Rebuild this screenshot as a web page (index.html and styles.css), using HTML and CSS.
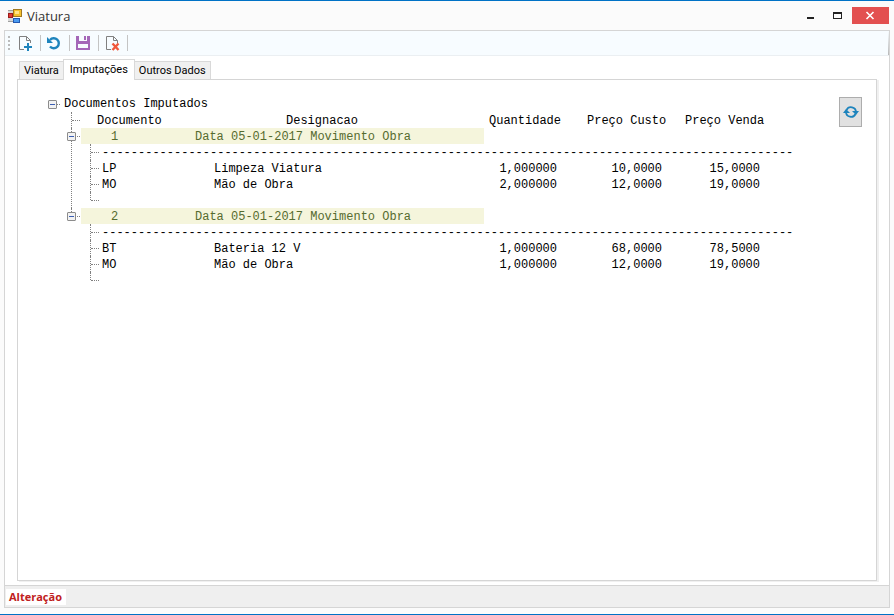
FILE: index.html
```html
<!DOCTYPE html>
<html lang="pt">
<head>
<meta charset="utf-8">
<title>Viatura</title>
<link rel="stylesheet" href="styles.css">
</head>
<body>
<div class="window">
  <header class="titlebar">
    <svg class="app-icon" width="14" height="14" viewBox="0 0 14 14" aria-hidden="true">
      <path d="M0 1h5v12H0z" fill="#d8d8d8"/>
      <path d="M0 1h5v1H0zM0 12h5v1H0z" fill="#a0a0a0"/>
      <rect x="0.5" y="4.5" width="4" height="4" fill="#e03a34" stroke="#9c1c1c"/>
      <rect x="5.5" y="0.5" width="8" height="7" fill="#f5c02c" stroke="#a07820"/>
      <rect x="7" y="2" width="4" height="3" fill="#ffe48a"/>
      <rect x="5.5" y="9.5" width="6" height="4" fill="#4a9af0" stroke="#2458b0"/>
    </svg>
    <h1 class="title">Viatura</h1>
    <div class="window-buttons">
      <button class="window-button" aria-label="Minimizar"><svg width="27" height="17" viewBox="0 0 27 17"><path d="M9 10h7v2H9z" fill="#222"/></svg></button>
      <button class="window-button" aria-label="Maximizar"><svg width="27" height="17" viewBox="0 0 27 17"><path d="M8 5h9v7H8zM9 7v4h7V7z" fill="#222" fill-rule="evenodd"/></svg></button>
      <button class="window-button close" aria-label="Fechar"><svg width="37" height="17" viewBox="0 0 37 17"><path d="M14.500 5l7 7M21.500 5l-7 7" stroke="#fff" stroke-width="1.600"/></svg></button>
    </div>
  </header>

  <div class="frame">
    <div class="toolbar" role="toolbar" aria-label="Ações">
      <span class="grip"></span>
      <button class="tool" aria-label="Novo"><svg width="16" height="16" viewBox="0 0 16 16"><path d="M7 14.500H2.500V1.500H9.500L13.500 5.500V8M9.500 1.500V5.500H13.500" fill="none" stroke="#808080"/><path d="M11 8v8M7 12h8" stroke="#1e84bd" stroke-width="2"/></svg></button>
      <button class="tool" aria-label="Desfazer"><svg width="16" height="16" viewBox="0 0 16 16"><path d="M4 5A5 5 0 1 1 4 11.500" fill="none" stroke="#1e84bd" stroke-width="2.400"/><path d="M1 2v6h6z" fill="#1e84bd"/></svg></button>
      <button class="tool" aria-label="Gravar"><svg width="16" height="16" viewBox="0 0 16 16"><path d="M1 1h14v14H1z" fill="#a467b8"/><path d="M4 1h8v5H4zM3 9h10v4H3z" fill="#f7fcff"/><path d="M9 1h2v4H9z" fill="#a467b8"/></svg></button>
      <button class="tool" aria-label="Eliminar"><svg width="16" height="16" viewBox="0 0 16 16"><path d="M7 14.500H2.500V1.500H9.500L13.500 5.500V8M9.500 1.500V5.500H13.500" fill="none" stroke="#808080"/><path d="M8.500 8.500l6 6.500M14.500 8.500l-6 6.500" stroke="#f0583c" stroke-width="2.400"/></svg></button>
    </div>

    <main class="content">
      <div class="tabs" role="tablist">
        <button class="tab" role="tab" aria-selected="false">Viatura</button>
        <button class="tab active" role="tab" aria-selected="true">Imputações</button>
        <button class="tab" role="tab" aria-selected="false">Outros Dados</button>
      </div>
      <section class="panel" role="tabpanel">
        <ul class="tree">
          <li class="root">
            <div class="root-row"><button class="toggle" aria-label="Recolher"></button><span>Documentos Imputados</span></div>
            <ul class="documents">
              <li class="node"><div class="row heading"><span>Documento</span><span>Designacao</span><span>Quantidade</span><span>Preço Custo</span><span>Preço Venda</span></div></li>
              <li class="node">
                <button class="toggle" aria-label="Recolher"></button>
                <div class="row band"><span>1</span><span>Data 05-01-2017 Movimento Obra</span></div>
                <ul class="lines">
                  <li class="leaf"><div class="rule">------------------------------------------------------------------------------------------------</div></li>
                  <li class="leaf"><div class="row line"><span>LP</span><span>Limpeza Viatura</span><span>1,000000</span><span>10,0000</span><span>15,0000</span></div></li>
                  <li class="leaf"><div class="row line"><span>MO</span><span>Mão de Obra</span><span>2,000000</span><span>12,0000</span><span>19,0000</span></div></li>
                  <li class="leaf"></li>
                </ul>
              </li>
              <li class="node">
                <button class="toggle" aria-label="Recolher"></button>
                <div class="row band"><span>2</span><span>Data 05-01-2017 Movimento Obra</span></div>
                <ul class="lines">
                  <li class="leaf"><div class="rule">------------------------------------------------------------------------------------------------</div></li>
                  <li class="leaf"><div class="row line"><span>BT</span><span>Bateria 12 V</span><span>1,000000</span><span>68,0000</span><span>78,5000</span></div></li>
                  <li class="leaf"><div class="row line"><span>MO</span><span>Mão de Obra</span><span>1,000000</span><span>12,0000</span><span>19,0000</span></div></li>
                  <li class="leaf"></li>
                </ul>
              </li>
            </ul>
          </li>
        </ul>
        <button class="refresh" aria-label="Atualizar"><svg width="16" height="14" viewBox="0 0 16 14"><path d="M3.500 5A5 5 0 0 1 13 7M12.500 9A5 5 0 0 1 3 7" fill="none" stroke="#1e84bd" stroke-width="1.800"/><path d="M0 8l3-4 4 4zM9 6h7l-3 4z" fill="#1e84bd"/></svg></button>
      </section>
    </main>

    <footer class="status"><span class="mode">Alteração</span></footer>
  </div>
</div>
</body>
</html>
```

FILE: styles.css
```css
* { box-sizing: border-box; }

body {
  margin: 0;
  background: #fbfbfb;
  color: #000;
  font: 12px/16px "Open Sans", "Noto Sans", sans-serif;
}

button {
  margin: 0;
  padding: 0;
  border: 0;
  background: none;
  color: inherit;
  font: inherit;
}

svg { display: block; }

ul {
  margin: 0;
  padding: 0;
  list-style: none;
}

.window {
  display: flex;
  flex-direction: column;
  min-height: 100vh;
  padding: 0 4px 6px;
  border-top: 1px solid #0072c6;
  border-bottom: 1px solid #0072c6;
}

.titlebar {
  display: flex;
  align-items: center;
  height: 29px;
  padding: 0 1px 0 4px;
}

.title {
  flex: 1;
  margin: 0 0 0 5px;
  color: #333;
  font-size: 13px;
  font-weight: 400;
}

.window-buttons { display: flex; }

.close { background: #e35050; }

.frame {
  display: flex;
  flex: 1;
  flex-direction: column;
  border: 1px solid #d5d5d5;
  background: #fff;
}

.toolbar {
  display: flex;
  align-items: center;
  height: 25px;
  border-bottom: 1px solid #ebeff2;
  background: linear-gradient(#f7fcff, #b8b8b8) right / 1px 100% no-repeat, #f7fcff;
}

.grip {
  width: 2px;
  height: 14px;
  margin: 0 2px 0 3px;
  background: repeating-linear-gradient(#bbb 0 2px, transparent 2px 4px);
}

.tool {
  padding: 0 7px 0 5px;
  border-right: 1px solid #c4c4c4;
}

.content {
  display: flex;
  flex: 1;
  flex-direction: column;
  padding: 3px 12px 4px;
}

.tabs {
  display: flex;
  align-items: flex-end;
  height: 20px;
  font: 11px/16px Roboto, "Open Sans", sans-serif;
}

.tab {
  height: 18px;
  margin-left: 2px;
  padding: 0 4px;
  border: 1px solid #d9d9d9;
  border-bottom: 0;
  background: #f0f0f0;
}

.tab + .tab { margin-left: 0; }

.tab.active {
  z-index: 1;
  height: 21px;
  margin: 0 -1px -1px;
  padding: 0 6px;
  background: #fff;
}

.panel {
  display: flex;
  flex: 1;
  align-items: flex-start;
  justify-content: space-between;
  padding: 16px 14px 0 30px;
  border: 1px solid #d5d5d5;
  box-shadow: 2px 1px 0 #f0f0f0;
}

.tree {
  font: 12px/18px "Liberation Mono", monospace;
  white-space: nowrap;
}

.toggle {
  width: 9px;
  height: 9px;
  border: 1px solid #8c8c8c;
  border-radius: 1px;
  background: linear-gradient(#3c5fb4, #3c5fb4) center / 5px 1px no-repeat, #f2f2f2;
}

.root-row {
  display: flex;
  align-items: center;
  height: 16px;
}

.root-row::after {
  order: 1;
  width: 3px;
  content: "";
  border-top: 1px dotted #808080;
}

.root-row span {
  order: 2;
  margin-left: 4px;
}

.documents { margin-left: 23px; }

.node,
.leaf {
  position: relative;
  min-height: 16px;
  border-left: 1px dotted #808080;
}

.node::before,
.leaf::before {
  position: absolute;
  top: 8px;
  left: 0;
  width: 8px;
  content: "";
  border-top: 1px dotted #808080;
}

.node:last-child,
.leaf:last-child { border-left-color: transparent; }

.node:last-child::after,
.leaf:last-child::after {
  position: absolute;
  top: 0;
  left: -1px;
  height: 8px;
  content: "";
  border-left: 1px dotted #808080;
}

.node > .toggle {
  position: absolute;
  z-index: 1;
  top: 4px;
  left: -5px;
}

.row,
.rule { height: 16px; }

.row { display: grid; }

.heading {
  grid-template-columns: 189px 203px 98px 98px 98px;
  margin-left: 25px;
}

.band {
  grid-template-columns: 84px 1fr;
  width: 403px;
  margin-left: 9px;
  padding-left: 30px;
  background: #f5f5dc;
  color: #556b2f;
}

.lines { margin-left: 18px; }

.line,
.rule { margin-left: 11px; }

.line { grid-template-columns: 112px 238px 105px 105px 98px; }

.line span:nth-child(n + 3) { text-align: right; }

.refresh {
  display: grid;
  place-items: center;
  width: 23px;
  height: 30px;
  margin-top: 1px;
  border: 1px solid #adadad;
  background: #e1e1e1;
}

.status {
  display: flex;
  align-items: center;
  height: 22px;
  padding-left: 1px;
  border-top: 1px solid #d5d5d5;
  background: #efefef;
}

.mode {
  padding: 0 4px 0 3px;
  background: #fff;
  color: #c02020;
  font-size: 11px;
  font-weight: 700;
}
```
